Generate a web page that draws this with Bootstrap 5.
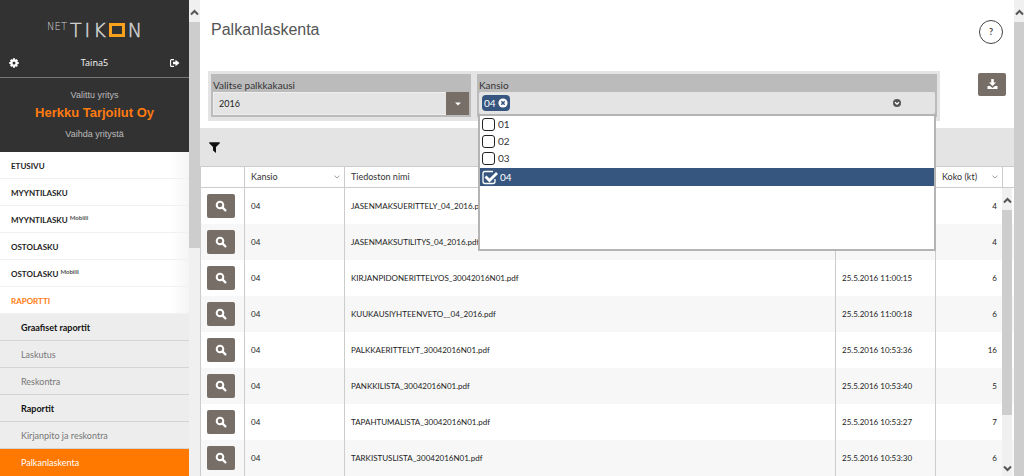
<!DOCTYPE html>
<html lang="fi">
<head>
<meta charset="utf-8">
<meta name="viewport" content="width=device-width, initial-scale=1">
<title>Palkanlaskenta</title>
<link href="https://cdn.jsdelivr.net/npm/bootstrap@5.3.0/dist/css/bootstrap.min.css" rel="stylesheet">
<style>
body{font-family:Lato,"Liberation Sans",sans-serif;font-size:9px;line-height:12px;color:#333;background:#fff}
a{text-decoration:none;color:inherit}
.side-nav{width:189px;background:#fff}
.brand-area{background:#323232;color:#ddd;border-bottom:1px solid #777;height:78px}
.brand-logo{padding-top:20px;height:50px;font:200 19px/20px "DejaVu Sans",sans-serif;color:#d2d2d2;gap:3px;-webkit-text-stroke:.5px #d2d2d2}
.brand-net{font-size:10px;line-height:10px;padding-top:2px;-webkit-text-stroke:0}
.brand-o{width:16px;height:14px;border:3px solid #f7a11c;margin-top:3px}
.user-line{padding:7px 9px 0 9px;font:9px/12px "Noto Sans",sans-serif;color:#eee}
.plain-btn{border:0;padding:0;background:none;color:#fff;line-height:0}
.company{background:#323232;color:#bcbcbc;height:74px;padding-top:10px;font:9px/14px "Liberation Sans",sans-serif}
.company strong{display:block;color:#ff7b10;font-size:13px;line-height:18px;margin:2px 0 5px}
.menu-main a{display:block;height:27px;padding:8px 11px 0;font-size:8px;line-height:12px;font-weight:700;color:#222;border-bottom:1px solid #f1f1f1;background:linear-gradient(90deg,#fff 90%,#f5f5f5)}
.menu-main a.current{color:#ff7b10}
.menu-main sup{font-size:6px;color:#555;top:-3px;line-height:0;vertical-align:baseline}
.menu-sub a{display:block;height:27px;padding:8px 21px 0;color:#777;background:#ededed;border-bottom:1px solid #d4d4d4}
.menu-sub a.group{font-weight:700;color:#111}
.menu-sub a.current{background:#ff7800;border-color:#ff7800;color:#fff}
.scroll-rail{width:10px;background:#f0f0f0;line-height:0;color:#555}
.nav-rail{width:11px}
.scroll-thumb{background:#cdcdcd}
.scroll-end{height:22px;padding-top:9px;text-align:center;flex:none}
h1{font:16px/20px "Liberation Sans",sans-serif;margin:0;color:#555}
.title-row{padding:20px 11px 0;height:71px}
.help{width:24px;height:24px;border:1px solid #444;border-radius:50%;background:#fff;color:#444;font:700 9px/20px Lato,sans-serif;padding:0}
.filters{padding-left:8px;height:57px}
.outer-field{background:#e4e4e4;padding:3px;height:50px}
.inner-field{background:#bbb;height:43px;padding:4px 2px 0;position:relative}
.inner-field .cap{font-size:10px;line-height:14px;display:block;color:#333}
.period{width:266px}
.period select{appearance:none;height:23px;width:100%;border:1px solid #eee;border-right:0;background:#e4e4e4;font-size:9px;padding:0 5px;border-radius:0;color:#222;display:block}
.period .arrow{position:absolute;right:2px;bottom:2px;width:23px;height:23px;background:#776e67;pointer-events:none}
.folder{flex:0 1 466px}
.tokens{height:22px;background:#e4e4e4;border-radius:2px;padding:0 34px 0 3px}
.token{background:#36557f;color:#fff;border-radius:4px;height:16px;font-size:10px;padding:0 2px;gap:2px}
.choices{position:absolute;z-index:5;top:40px;left:1px;right:1px;height:137px;background:#fff;border:2px solid #b4b4b4}
.choices label{display:flex;align-items:center;height:17px;gap:3px;padding-left:2px;font-size:10px;line-height:17px}
.choices label.picked{height:18px;margin-top:1px;background:#36557f;color:#fff}
.choices input{appearance:none;flex:none;width:13px;height:13px;border:1px solid #222;border-radius:3px;margin:0;background:#fff}
.choices .picked input{width:15px;height:15px;border:0;border-radius:0;background:none}
.check-box{position:relative;display:flex}
.check-box svg{position:absolute;left:0;top:0;pointer-events:none}
.download{width:28px;height:23px;border:0;border-radius:2px;background:#776e67;padding:0;line-height:0;margin:2px 8px 0 auto}
.tool-strip{height:38px;background:#e4e4e4;padding:0 9px}
.files{table-layout:fixed;width:100%;border-collapse:separate;border-spacing:0;margin:0}
.files th{height:22px;border-top:1px solid #ccc;border-bottom:1px solid #ccc;font-weight:400;padding:0 4px 0 6px}
.files td{height:36px;font-size:8px;padding:0 6px;white-space:nowrap;color:#222}
.files th,.files td{border-right:1px solid #ccc}
.files td:first-child,.files th:first-child{border-left:1px solid #ccc}
.files td:nth-child(5){border-right:0}
.files td:last-child,.files th:last-child{border-right:0}
.files tr:nth-child(even) td{background:#f7f7f7}
.look{width:28px;height:24px;border:0;border-radius:2px;background:#776e67;padding:0;line-height:0}
.table-rail{position:absolute;top:22px;right:2px;bottom:0}
</style>
<script src="https://cdn.jsdelivr.net/npm/bootstrap@5.3.0/dist/js/bootstrap.bundle.min.js" defer></script>
</head>
<body class="overflow-hidden">
<svg class="d-none">
<symbol id="up" viewBox="0 0 9 7"><path d="M1 5.5 4.500 2 8 5.500" fill="none" stroke="currentColor" stroke-width="2"/></symbol>
<symbol id="zoom" viewBox="0 0 12 12"><circle cx="5" cy="5" r="3.300" fill="none" stroke="#fff" stroke-width="2"/><path d="M7.400 7.400 10.400 10.400" stroke="#fff" stroke-width="2.200" stroke-linecap="round"/></symbol>
<symbol id="chev" viewBox="0 0 6 4"><path d="M.5.7 3 3 5.500.7" fill="none" stroke="#888" stroke-width=".8"/></symbol>
</svg>
<div class="d-flex vh-100 overflow-hidden">
 <nav class="side-nav flex-shrink-0">
  <div class="brand-area">
   <div class="brand-logo d-flex justify-content-center" aria-label="NET TIKON"><span class="brand-net">NET</span><span>T</span><span>I</span><span>K</span><span class="brand-o"></span><span>N</span></div>
   <div class="user-line d-flex justify-content-between align-items-center">
    <button class="plain-btn" aria-label="Asetukset"><svg width="10" height="10" viewBox="0 0 10 10"><circle cx="5" cy="5" r="2.600" fill="none" stroke="#fff" stroke-width="2.200"/><path d="M5 .3v2M5 7.700v2M.3 5h2M7.700 5h2M1.700 1.700l1.400 1.400M6.900 6.900l1.400 1.400M8.300 1.700 6.900 3.100M3.100 6.900 1.700 8.300" stroke="#fff" stroke-width="2"/></svg></button>
    <span>Taina5</span>
    <button class="plain-btn" aria-label="Kirjaudu ulos"><svg width="10" height="8" viewBox="0 0 10 8"><path d="M4 .6H1.600Q.6.6.6 1.600v4.800q0 1 1 1H4" fill="none" stroke="#fff" stroke-width="1.100"/><path d="M3 2.800h2.500V.8L9.500 4 5.500 7.200v-2H3z" fill="#fff"/></svg></button>
   </div>
  </div>
  <div class="company text-center"><span>Valittu yritys</span><strong>Herkku Tarjoilut Oy</strong><a href="#">Vaihda yritystä</a></div>
  <div class="menu-main"><a href="#">ETUSIVU</a><a href="#">MYYNTILASKU</a><a href="#">MYYNTILASKU <sup>Mobiili</sup></a><a href="#">OSTOLASKU</a><a href="#">OSTOLASKU <sup>Mobiili</sup></a><a href="#" class="current">RAPORTTI</a></div>
  <div class="menu-sub"><a href="#" class="group">Graafiset raportit</a><a href="#">Laskutus</a><a href="#">Reskontra</a><a href="#" class="group">Raportit</a><a href="#">Kirjanpito ja reskontra</a><a href="#" class="current">Palkanlaskenta</a></div>
 </nav>
 <div class="scroll-rail nav-rail flex-shrink-0 d-flex flex-column"><div class="scroll-end"><svg width="9" height="7"><use href="#up"/></svg></div><div class="scroll-thumb" style="height:47.500%"></div></div>
 <main class="flex-grow-1 d-flex flex-column">
  <div class="title-row d-flex justify-content-between align-items-start"><h1>Palkanlaskenta</h1><button class="help" aria-label="Ohje">?</button></div>
  <div class="filters d-flex align-items-start">
   <div class="outer-field period flex-shrink-0"><div class="inner-field"><label class="cap" for="period">Valitse palkkakausi</label><select id="period"><option>2016</option></select>
     <span class="arrow d-flex align-items-center justify-content-center"><svg width="6" height="4" viewBox="0 0 6 4"><path d="M0 .5h6L3 3.500z" fill="#fff"/></svg></span></div></div>
   <div class="outer-field folder"><div class="inner-field"><label class="cap" for="f04">Kansio</label>
     <div class="tokens d-flex align-items-center justify-content-between"><button class="token d-flex align-items-center border-0" aria-label="Poista 04">04 <svg width="10" height="10" viewBox="0 0 10 10"><circle cx="5" cy="5" r="4.600" fill="#fff"/><path d="m3.300 3.300 3.400 3.400M6.700 3.300 3.300 6.700" stroke="#36557f" stroke-width="1.500"/></svg></button>
      <button class="plain-btn" aria-label="Sulje lista"><svg width="8" height="8" viewBox="0 0 8 8"><circle cx="4" cy="4" r="4" fill="#555"/><path d="M2 3.200 4 5.200l2-2" fill="none" stroke="#fff" stroke-width="1.300"/></svg></button></div>
     <div class="choices">
      <label><input type="checkbox">01</label><label><input type="checkbox">02</label><label><input type="checkbox">03</label>
      <label class="picked"><span class="check-box"><input type="checkbox" id="f04" checked><svg width="16" height="15" viewBox="0 0 16 15"><path d="M11 1.500H3q-2 0-2 2v8q0 2 2 2h8q2 0 2-2V9" fill="none" stroke="#fff" stroke-width="1.300"/><path d="m3.500 6.500 4 4L15 3" fill="none" stroke="#fff" stroke-width="2.800"/></svg></span>04</label>
     </div></div></div>
   <button class="download" aria-label="Lataa"><svg width="11" height="11" viewBox="0 0 11 11"><path d="M4.200 0h2.600v3.500H9L5.500 7 2 3.500h2.200zM.5 7H3l2.500 2L8 7h2.500v3H.5z" fill="#fff"/></svg></button>
  </div>
  <div class="tool-strip d-flex align-items-center"><button class="plain-btn" aria-label="Suodata"><svg width="11" height="11" viewBox="0 0 11 11"><path d="M.2.300h10.600v1L7 5v6L4 8.500V5L.2 1.300z" fill="#111"/></svg></button></div>
  <div class="position-relative flex-grow-1 overflow-hidden">
   <table class="files">
    <colgroup><col style="width:45px"><col style="width:100px"><col><col style="width:100px"><col style="width:67px"><col style="width:11px"></colgroup>
    <thead><tr><th></th><th><span class="d-flex justify-content-between align-items-center">Kansio<svg width="6" height="4"><use href="#chev"/></svg></span></th><th>Tiedoston nimi</th><th></th><th><span class="d-flex justify-content-between align-items-center">Koko (kt)<svg width="6" height="4"><use href="#chev"/></svg></span></th><th></th></tr></thead>
    <tbody>
     <tr><td><button class="look" aria-label="Avaa"><svg width="12" height="12"><use href="#zoom"/></svg></button></td><td>04</td><td>JASENMAKSUERITTELY_04_2016.pdf</td><td></td><td class="text-end">4</td><td></td></tr>
     <tr><td><button class="look" aria-label="Avaa"><svg width="12" height="12"><use href="#zoom"/></svg></button></td><td>04</td><td>JASENMAKSUTILITYS_04_2016.pdf</td><td></td><td class="text-end">4</td><td></td></tr>
     <tr><td><button class="look" aria-label="Avaa"><svg width="12" height="12"><use href="#zoom"/></svg></button></td><td>04</td><td>KIRJANPIDONERITTELYOS_30042016N01.pdf</td><td>25.5.2016 11:00:15</td><td class="text-end">6</td><td></td></tr>
     <tr><td><button class="look" aria-label="Avaa"><svg width="12" height="12"><use href="#zoom"/></svg></button></td><td>04</td><td>KUUKAUSIYHTEENVETO__04_2016.pdf</td><td>25.5.2016 11:00:18</td><td class="text-end">6</td><td></td></tr>
     <tr><td><button class="look" aria-label="Avaa"><svg width="12" height="12"><use href="#zoom"/></svg></button></td><td>04</td><td>PALKKAERITTELYT_30042016N01.pdf</td><td>25.5.2016 10:53:36</td><td class="text-end">16</td><td></td></tr>
     <tr><td><button class="look" aria-label="Avaa"><svg width="12" height="12"><use href="#zoom"/></svg></button></td><td>04</td><td>PANKKILISTA_30042016N01.pdf</td><td>25.5.2016 10:53:40</td><td class="text-end">5</td><td></td></tr>
     <tr><td><button class="look" aria-label="Avaa"><svg width="12" height="12"><use href="#zoom"/></svg></button></td><td>04</td><td>TAPAHTUMALISTA_30042016N01.pdf</td><td>25.5.2016 10:53:27</td><td class="text-end">7</td><td></td></tr>
     <tr><td><button class="look" aria-label="Avaa"><svg width="12" height="12"><use href="#zoom"/></svg></button></td><td>04</td><td>TARKISTUSLISTA_30042016N01.pdf</td><td>25.5.2016 10:53:30</td><td class="text-end">6</td><td></td></tr>
    </tbody>
   </table>
   <div class="scroll-rail table-rail d-flex flex-column"><div class="scroll-end"><svg width="9" height="7"><use href="#up"/></svg></div><div class="scroll-thumb flex-grow-1"></div><div style="height:46px" class="flex-shrink-0"></div><div class="scroll-end pt-1 h-auto pb-1"><svg width="9" height="7" style="transform:rotate(180deg)"><use href="#up"/></svg></div></div>
  </div>
 </main>
 <div class="scroll-rail flex-shrink-0 d-flex flex-column"><div class="scroll-end"><svg width="9" height="7"><use href="#up"/></svg></div><div class="scroll-thumb flex-grow-1"></div></div>
</div>
</body>
</html>
